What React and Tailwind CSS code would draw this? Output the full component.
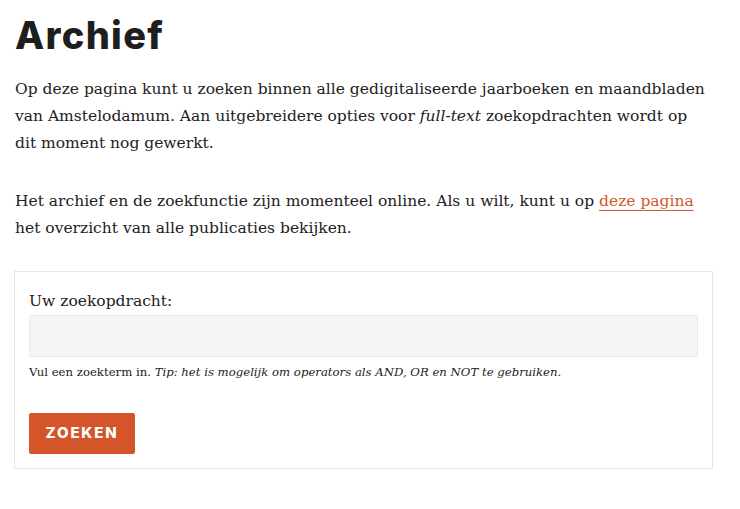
export default function App() {
  const serif = { fontFamily: '"DejaVu Serif", serif' };
  return (
    <div className="bg-white w-[740px] h-[509px] overflow-hidden text-[#222]" style={serif}>
      <div className="pl-[15px] pr-[28px]">
        <h1 className="pt-[11px] text-[38px] leading-[48px] font-extrabold tracking-[1.3px] text-[#1e1e1e]" style={{ fontFamily: 'Inter, sans-serif' }}>
          Archief
        </h1>
        <p className="mt-[17px] text-[15.5px] leading-[27px]">
          Op deze pagina kunt u zoeken binnen alle gedigitaliseerde jaarboeken en maandbladen van Amstelodamum. Aan uitgebreidere opties voor <em>full-text</em> zoekopdrachten wordt op dit moment nog gewerkt.
        </p>
        <p className="mt-[31px] text-[15.5px] leading-[27px]">
          Het archief en de zoekfunctie zijn momenteel online. Als u wilt, kunt u op{' '}
          <a className="text-[#d4592c] underline underline-offset-[4px] decoration-1">deze pagina</a>{' '}
          het overzicht van alle publicaties bekijken.
        </p>
        <div className="mt-[29px] ml-[-1px] w-[699px] border border-[#e6e6e6] px-[14px] pt-[17px] pb-[14px]">
          <label className="block text-[15.5px] leading-[24px]">Uw zoekopdracht:</label>
          <div className="mt-[2px] h-[42px] w-[669px] rounded-[2px] border border-[#e9e9e9] bg-[#f5f5f5]"></div>
          <p className="mt-[6px] text-[11.7px] leading-[18px]">
            Vul een zoekterm in. <em>Tip: het is mogelijk om operators als AND, OR en NOT te gebruiken.</em>
          </p>
          <button className="mt-[32px] h-[41px] w-[106px] rounded-[2px] bg-[#d5552b] text-white text-[15px] font-extrabold tracking-[1.8px]" style={{ fontFamily: 'Inter, sans-serif' }}>
            ZOEKEN
          </button>
        </div>
      </div>
    </div>
  );
}
